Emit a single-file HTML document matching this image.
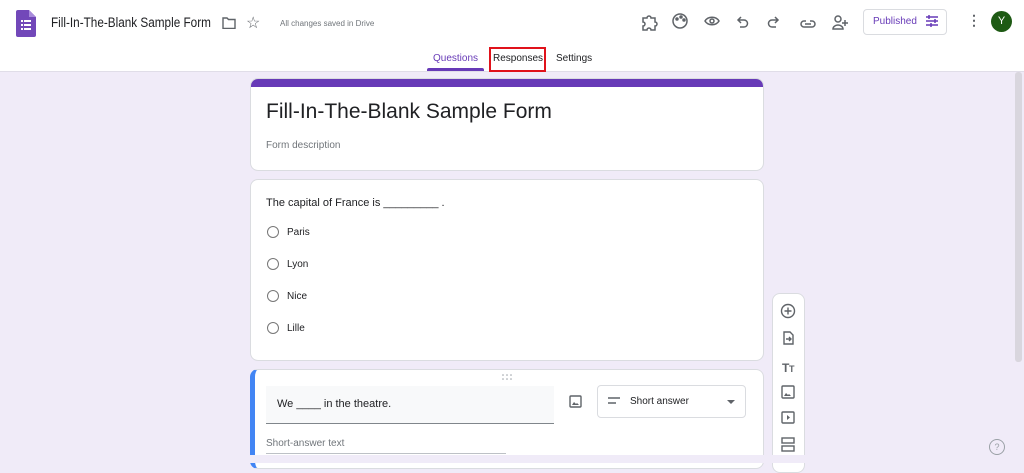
<!DOCTYPE html><html><head><style>
body{margin:0;width:1024px;height:463px;overflow:hidden;background:#f0ebf8;font-family:"Liberation Sans",sans-serif;position:relative;color:#202124}
.a{position:absolute}
.hdr{left:0;top:0;width:1024px;height:71px;background:#fff;border-bottom:1px solid #e0dde8}
.card{background:#fff;border-radius:8px;border:1px solid #dadce0;box-sizing:border-box}
.rad{width:12px;height:12px;border:1.5px solid #777;border-radius:50%;box-sizing:border-box}
.opt{font-size:10px;color:#202124}
svg{position:absolute}
</style></head><body>
<div class="a hdr"></div>
<svg style="left:16px;top:10px" width="20" height="27" viewBox="0 0 20 27"><path d="M2 0h11l7 7v18a2 2 0 0 1-2 2H2a2 2 0 0 1-2-2V2a2 2 0 0 1 2-2z" fill="#7248b9"/><path d="M13 0v7h7z" fill="#a88bdb"/><g fill="#fff"><rect x="5" y="10" width="2" height="2"/><rect x="8" y="10" width="7" height="2"/><rect x="5" y="14" width="2" height="2"/><rect x="8" y="14" width="7" height="2"/><rect x="5" y="18" width="2" height="2"/><rect x="8" y="18" width="7" height="2"/></g></svg>
<div class="a" style="left:51px;top:15px;font-size:13.5px;color:#202124;white-space:nowrap;transform:scaleX(0.87);transform-origin:left">Fill-In-The-Blank Sample Form</div>
<svg style="left:222px;top:17px" width="14" height="12" viewBox="0 0 14 12"><path d="M1 1h4l1.5 1.5H13v9H1z" fill="none" stroke="#5f6368" stroke-width="1.4"/></svg>
<div class="a" style="left:246px;top:13px;font-size:16px;color:#5f6368">☆</div>
<div class="a" style="left:280px;top:19px;font-size:8px;color:#70757a">All changes saved in Drive</div>
<svg style="left:640px;top:12px" width="210" height="20" viewBox="0 0 210 20" fill="none" stroke="#5f6368" stroke-width="1.5">
<path d="M3 6h4a2 2 0 0 1 4 0h4v4a2 2 0 0 1 0 4v4h-4a2 2 0 0 0-4 0H3v-4a2 2 0 0 0 0-4z"/>
<circle cx="40" cy="9" r="7"/><circle cx="37" cy="7" r="1" fill="#5f6368"/><circle cx="41" cy="5" r="1" fill="#5f6368"/><circle cx="44" cy="8" r="1" fill="#5f6368"/>
<path d="M65 9c3-5 11-5 14 0c-3 5-11 5-14 0z"/><circle cx="72" cy="9" r="2"/>
<path d="M98 8h6a3 3 0 0 1 0 7h-4M101 5l-3 3 3 3"/>
<path d="M138 8h-6a3 3 0 0 0 0 7h4M135 5l3 3-3 3"/>
<path d="M166 9h-2a3 3 0 0 0 0 6h4M170 9h2a3 3 0 0 1 0 6h-4M165 12h6"/>
<circle cx="198" cy="7" r="3"/><path d="M193 17a5 4 0 0 1 10 0zM205 8v6M202 11h6"/>
</svg>
<div class="a" style="left:863px;top:9px;width:82px;height:24px;border:1px solid #dadce0;border-radius:4px"></div>
<div class="a" style="left:873px;top:16px;font-size:10px;color:#673ab7">Published</div>
<svg style="left:925px;top:14px" width="14" height="14" viewBox="0 0 14 14" stroke="#673ab7" stroke-width="1.5"><path d="M1 3h12M1 7h12M1 11h12M4 1v4M10 5v4M6 9v4"/></svg>
<div class="a" style="left:967px;top:12px;font-size:14px;color:#5f6368;font-weight:bold">⋮</div>
<div class="a" style="left:991px;top:11px;width:21px;height:21px;border-radius:50%;background:#1e5a14;color:#fff;font-size:11px;text-align:center;line-height:21px">Y</div>
<div class="a" style="left:433px;top:53px;font-size:10px;color:#673ab7">Questions</div>
<div class="a" style="left:427px;top:68px;width:57px;height:3px;background:#673ab7;border-radius:2px 2px 0 0"></div>
<div class="a" style="left:493px;top:53px;font-size:10px;color:#202124">Responses</div>
<div class="a" style="left:489px;top:47px;width:53px;height:21px;border:2px solid #e0121b"></div>
<div class="a" style="left:556px;top:53px;font-size:10px;color:#202124">Settings</div>
<div class="a" style="left:1015px;top:72px;width:7px;height:290px;background:#d9d6de;border-radius:3px"></div>
<div class="a card" style="left:250px;top:78px;width:514px;height:93px;overflow:hidden"><div style="height:8px;background:#673ab7"></div></div>
<div class="a" style="left:266px;top:100px;font-size:21px">Fill-In-The-Blank Sample Form</div>
<div class="a" style="left:266px;top:140px;font-size:10px;color:#70757a">Form description</div>
<div class="a card" style="left:250px;top:179px;width:514px;height:182px"></div>
<div class="a" style="left:266px;top:197px;font-size:11px">The capital of France is _________ .</div>
<div class="a rad" style="left:267px;top:226px"></div><div class="a opt" style="left:287px;top:227px">Paris</div>
<div class="a rad" style="left:267px;top:258px"></div><div class="a opt" style="left:287px;top:259px">Lyon</div>
<div class="a rad" style="left:267px;top:290px"></div><div class="a opt" style="left:287px;top:291px">Nice</div>
<div class="a rad" style="left:267px;top:322px"></div><div class="a opt" style="left:287px;top:323px">Lille</div>
<div class="a card" style="left:250px;top:369px;width:514px;height:100px;border-left:5px solid #4285f4"></div>
<svg style="left:502px;top:374px" width="10" height="6" fill="#9aa0a6"><circle cx="1" cy="1" r="0.8"/><circle cx="5" cy="1" r="0.8"/><circle cx="9" cy="1" r="0.8"/><circle cx="1" cy="5" r="0.8"/><circle cx="5" cy="5" r="0.8"/><circle cx="9" cy="5" r="0.8"/></svg>
<div class="a" style="left:266px;top:386px;width:288px;height:37px;background:#f8f9fa;border-bottom:1px solid #80868b"></div>
<div class="a" style="left:277px;top:398px;font-size:11px">We ____ in the theatre.</div>
<svg style="left:569px;top:395px" width="13" height="13" viewBox="0 0 13 13"><rect x="1" y="1" width="11" height="11" rx="1" fill="none" stroke="#5f6368" stroke-width="1.4"/><path d="M3 10l2-3 2 2 1-1 2 2z" fill="#5f6368"/></svg>
<div class="a" style="left:597px;top:385px;width:149px;height:33px;border:1px solid #dadce0;border-radius:4px;box-sizing:border-box"></div>
<svg style="left:608px;top:397px" width="12" height="8" stroke="#5f6368" stroke-width="1.5"><path d="M0 1h12M0 6h8"/></svg>
<div class="a" style="left:630px;top:396px;font-size:10px">Short answer</div>
<svg style="left:727px;top:400px" width="8" height="5"><path d="M0 0h8L4 4z" fill="#5f6368"/></svg>
<div class="a" style="left:266px;top:438px;font-size:10px;color:#70757a">Short-answer text</div>
<div class="a" style="left:266px;top:453px;width:240px;height:1px;background:#bdc1c6"></div>
<div class="a card" style="left:772px;top:293px;width:33px;height:180px"></div>
<svg style="left:779px;top:302px" width="20" height="160" viewBox="0 0 20 160" fill="none" stroke="#5f6368" stroke-width="1.4">
<circle cx="9" cy="9" r="6.5"/><path d="M9 5.5v7M5.5 9h7"/>
<path d="M5 30h6l3 3v9H5zM7 37h5M10 35l2 2-2 2"/>
<text x="3" y="70" font-size="12" font-family="Liberation Sans" fill="#5f6368" stroke="none" font-weight="bold">T</text><text x="10" y="70" font-size="9" font-family="Liberation Sans" fill="#5f6368" stroke="none" font-weight="bold">T</text>
<rect x="3" y="84" width="12" height="12" rx="1"/><path d="M5 94l2-3 2 2 1-1 2 2z" fill="#5f6368" stroke="none"/>
<rect x="3" y="110" width="12" height="11" rx="1"/><path d="M8 113l3 2.5-3 2.5z" fill="#5f6368" stroke="none"/>
<rect x="3" y="136" width="12" height="5"/><rect x="3" y="144" width="12" height="5"/>
</svg>
<div class="a" style="left:0;top:455px;width:1024px;height:8px;background:#f0ebf8"></div>
<div class="a" style="left:989px;top:439px;width:14px;height:14px;border:1.3px solid #9aa0a6;border-radius:50%;font-size:9px;color:#9aa0a6;text-align:center;line-height:14px">?</div>
</body></html>
